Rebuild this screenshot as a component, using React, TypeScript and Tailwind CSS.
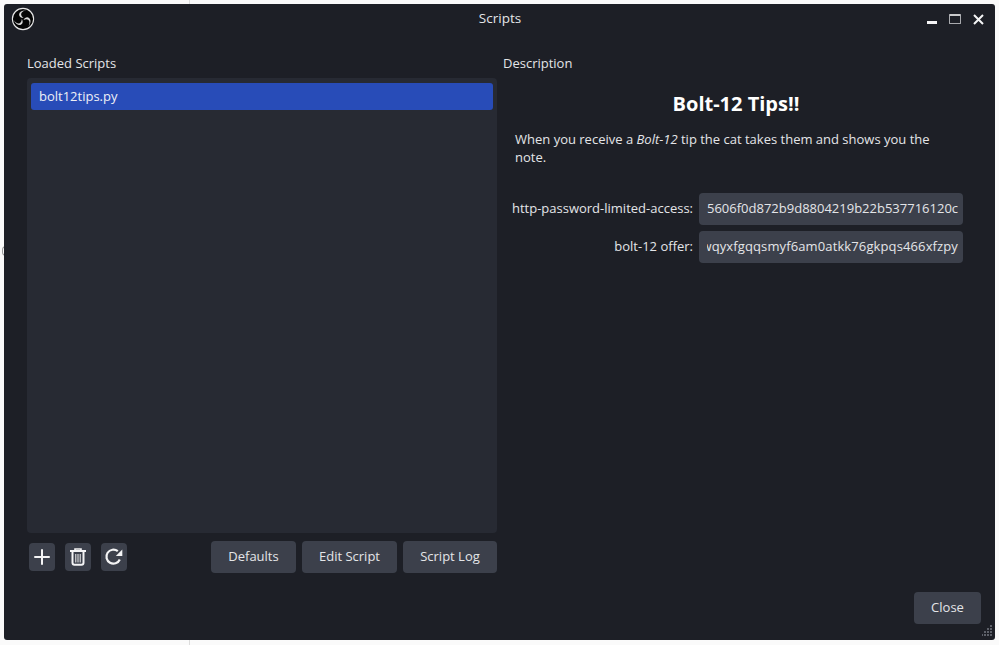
import React from 'react';
import { Plus } from 'lucide-react';

const BLADE = 'M12.6 11C10 11.100 7.900 9.700 8.100 7.300 8.400 4.800 11.400 3 15.600 3.500 12.700 3.700 10.300 5 10.100 7 10 8.800 11.300 10 12.600 11Z';

const ObsLogo = () => (
    <svg width="24" height="24" viewBox="0 0 24 24" className="-mt-[2px]">
        <circle cx="12" cy="12" r="10.6" fill="#050505" stroke="#e6e6e6" strokeWidth="1.1" />
        <g fill="#d8d8d8">
            <path d={BLADE} />
            <path d={BLADE} transform="rotate(120 12 12)" />
            <path d={BLADE} transform="rotate(240 12 12)" />
        </g>
    </svg>
);

const TrashIcon = () => (
    <svg width="16" height="18" viewBox="0 0 16 18" fill="none" stroke="#f4f4f5">
        <path d="M5 2.500V1h6v1.500" strokeWidth="1.600" />
        <path d="M0 3h16" strokeWidth="2" />
        <path d="M2.500 4v10.800c0 1.200.8 2 2 2h7c1.200 0 2-.8 2-2V4" strokeWidth="2" />
        <path d="M5.800 6v8.500M8 6v8.500M10.200 6v8.500" strokeWidth="1" />
    </svg>
);

const ReloadIcon = () => (
    <svg width="20" height="20" viewBox="0 0 20 20" fill="none">
        <path d="M15.800 12.500A7 7 0 1 1 13.800 4.200" stroke="#f4f4f5" strokeWidth="2.200" />
        <path d="M18.300 2.500V9H11.800Z" fill="#f4f4f5" />
    </svg>
);

const ResizeGrip = () => (
    <svg width="12" height="12" viewBox="0 0 12 12" className="absolute right-[1px] bottom-[3px]" fill="#5d6069">
        <rect x="8" y="0" width="2" height="2" />
        <rect x="5" y="3" width="2" height="2" /><rect x="8" y="3" width="2" height="2" />
        <rect x="2" y="6" width="2" height="2" /><rect x="5" y="6" width="2" height="2" /><rect x="8" y="6" width="2" height="2" />
        <rect x="-1" y="9" width="2" height="2" /><rect x="2" y="9" width="2" height="2" /><rect x="5" y="9" width="2" height="2" /><rect x="8" y="9" width="2" height="2" />
    </svg>
);

const IconButton: React.FC<{ children: React.ReactNode }> = ({ children }) => (
    <button className="w-[26px] h-[28px] bg-[#3c404b] rounded-[4px] flex items-center justify-center">{children}</button>
);

const ActionButton: React.FC<{ label: string, className: string }> = ({ label, className }) => (
    <button className={`h-[32px] bg-[#3c404b] rounded-[4px] text-[13px] text-[#e4e5e8] flex items-center justify-center ${className}`}>{label}</button>
);

const Field: React.FC<{ label: string, value: string, end?: boolean }> = ({ label, value, end }) => (
    <div className="flex items-center gap-[6px]">
        <label className="w-[190px] text-right whitespace-nowrap">{label}</label>
        <div className="w-[264px] h-[32px] bg-[#3c404b] rounded-[4px] pl-[8px] pr-[4px] flex items-center">
            <div className={`w-full overflow-hidden whitespace-nowrap flex ${end ? 'justify-end pr-[1px] tracking-[0.12px]' : ''}`}>
                <span className="shrink-0">{value}</span>
            </div>
        </div>
    </div>
);

export default function App() {
    return (
        <div className="relative w-[999px] h-[645px] bg-[#fafafa] pl-[4px] pr-[4px] pt-[4px] pb-[5px] overflow-hidden font-['Open_Sans',sans-serif] text-[13px] text-[#e4e5e8]">
            {/* bits of the page behind the window */}
            <div className="absolute left-[189px] top-0 w-px h-[4px] bg-[#dcdcdc]" />
            <div className="absolute left-[189px] bottom-0 w-px h-[5px] bg-[#dcdcdc]" />
            <div className="absolute left-[2px] top-[246px] w-[4px] h-[10px] rounded-l-full border-l border-y border-[#9a9a9a]" />

            <div className="relative w-full h-full bg-[#1d1f26] rounded-[3px] flex flex-col">
                {/* title bar */}
                <div className="h-[30px] shrink-0 flex items-center pl-[7px] pr-[11px] pt-[1px]">
                    <ObsLogo />
                    <div className="flex-1 text-center pl-[38px] text-[13.500px] -mt-[2px]">Scripts</div>
                    <div className="flex items-center gap-[12px] -mt-[1px]">
                        <div className="w-[10px] h-[10px] flex items-end"><div className="w-[10px] h-[3px] bg-[#f4f4f5]" /></div>
                        <div className="w-[12px] h-[10px] border border-[#a9aaae] border-t-2 border-t-[#c9cacc] rounded-[1px]" />
                        <svg width="11" height="11" viewBox="0 0 11 11" stroke="#f4f4f5" strokeWidth="2"><path d="M1 1l9 9M10 1l-9 9" /></svg>
                    </div>
                </div>

                {/* main */}
                <div className="flex-1 flex pl-[23px] pr-[14px] gap-[6px] min-h-0">
                    <div className="w-[470px] flex flex-col shrink-0 pt-[20px]">
                        <div className="h-[18px] leading-[18px] mb-[6px]">Loaded Scripts</div>
                        <div className="h-[455px] bg-[#272a33] rounded-[4px] p-[4px] pt-[5px]">
                            <div className="h-[27px] bg-[#284cb8] rounded-[3px] px-[8px] flex items-center text-[13px] text-[#eef0f6]">bolt12tips.py</div>
                        </div>
                        <div className="flex items-center mt-[8px] pl-[2px] gap-[10px]">
                            <IconButton><Plus size={24} color="#f4f4f5" strokeWidth={2} /></IconButton>
                            <IconButton><TrashIcon /></IconButton>
                            <IconButton><ReloadIcon /></IconButton>
                            <div className="flex-1 flex justify-end gap-[6px]">
                                <ActionButton label="Defaults" className="w-[85px]" />
                                <ActionButton label="Edit Script" className="w-[95px]" />
                                <ActionButton label="Script Log" className="w-[94px]" />
                            </div>
                        </div>
                    </div>

                    <div className="flex-1 flex flex-col pt-[20px]">
                        <div className="h-[18px] leading-[18px]">Description</div>
                        <h1 className="mt-[20px] w-[466px] text-center text-[20px] leading-[24px] font-bold text-white">Bolt-12 Tips!!</h1>
                        <p className="mt-[14px] ml-[12px] w-[432px] leading-[18px]">
                            When you receive a <i>Bolt-12</i> tip the cat takes them and shows you the note.
                        </p>
                        <div className="mt-[27px] flex flex-col gap-[6px]">
                            <Field label="http-password-limited-access:" value="5606f0d872b9d8804219b22b537716120c" />
                            <Field label="bolt-12 offer:" value="wqyxfgqqsmyf6am0atkk76gkpqs466xfzpy" end />
                        </div>
                    </div>
                </div>

                {/* footer */}
                <div className="flex justify-end pr-[14px] pb-[16px]">
                    <ActionButton label="Close" className="w-[67px]" />
                </div>
                <ResizeGrip />
            </div>
        </div>
    );
}
